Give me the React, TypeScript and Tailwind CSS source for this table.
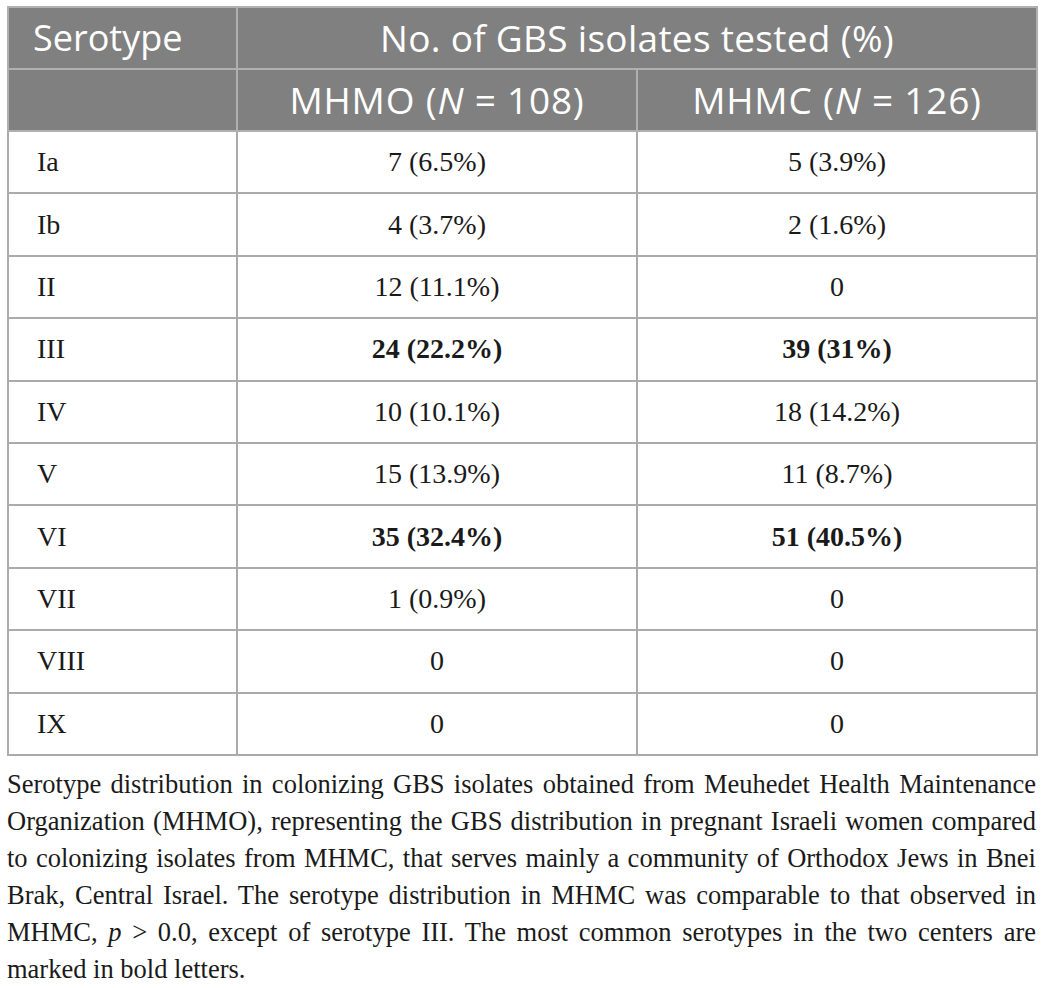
import React from "react";

const rows: { s: string; a: string; b: string; bold?: boolean }[] = [
  { s: "Ia", a: "7 (6.5%)", b: "5 (3.9%)" },
  { s: "Ib", a: "4 (3.7%)", b: "2 (1.6%)" },
  { s: "II", a: "12 (11.1%)", b: "0" },
  { s: "III", a: "24 (22.2%)", b: "39 (31%)", bold: true },
  { s: "IV", a: "10 (10.1%)", b: "18 (14.2%)" },
  { s: "V", a: "15 (13.9%)", b: "11 (8.7%)" },
  { s: "VI", a: "35 (32.4%)", b: "51 (40.5%)", bold: true },
  { s: "VII", a: "1 (0.9%)", b: "0" },
  { s: "VIII", a: "0", b: "0" },
  { s: "IX", a: "0", b: "0" },
];

const sans = "font-['Open_Sans',sans-serif]";
const serif = "font-['Liberation_Serif',serif]";

export default function App() {
  return (
    <div className="bg-white w-[1043px] h-[988px] overflow-hidden pt-[6px] px-[7px]">
      <table className="w-[1029px] border-collapse table-fixed">
        <colgroup>
          <col className="w-[229px]" />
          <col className="w-[400px]" />
          <col className="w-[400px]" />
        </colgroup>
        <thead>
          <tr className="h-[62px] bg-[#808080] text-white">
            <th className={`${sans} border-2 border-[#b0b0b0] text-left font-normal text-[36px] pl-[24px]`}>
              Serotype
            </th>
            <th colSpan={2} className={`${sans} border-2 border-[#b0b0b0] text-center font-normal text-[37px] tracking-[0.3px]`}>
              No. of GBS isolates tested (%)
            </th>
          </tr>
          <tr className="h-[62px] bg-[#808080] text-white">
            <th className="border-2 border-[#b0b0b0]"></th>
            <th className={`${sans} border-2 border-[#b0b0b0] text-center font-normal text-[37px] tracking-[0.8px]`}>
              MHMO (<i>N</i> = 108)
            </th>
            <th className={`${sans} border-2 border-[#b0b0b0] text-center font-normal text-[37px] tracking-[0.8px]`}>
              MHMC (<i>N</i> = 126)
            </th>
          </tr>
        </thead>
        <tbody className={`${serif} text-[28px] text-[#1a1a1a]`}>
          {rows.map((r) => (
            <tr key={r.s} className="h-[62.4px]">
              <td className="border-2 border-[#ababab] pl-[28px]">{r.s}</td>
              <td className={`border-2 border-[#ababab] text-center ${r.bold ? "font-bold" : ""}`}>{r.a}</td>
              <td className={`border-2 border-[#ababab] text-center ${r.bold ? "font-bold" : ""}`}>{r.b}</td>
            </tr>
          ))}
        </tbody>
      </table>
      <div className={`${serif} text-[26.5px] leading-[37px] text-[#1a1a1a] mt-[10px] w-[1029px]`}>
        <div className="text-justify [text-align-last:justify] whitespace-nowrap">
          Serotype distribution in colonizing GBS isolates obtained from Meuhedet Health Maintenance
        </div>
        <div className="text-justify [text-align-last:justify] whitespace-nowrap">
          Organization (MHMO), representing the GBS distribution in pregnant Israeli women compared
        </div>
        <div className="text-justify [text-align-last:justify] whitespace-nowrap">
          to colonizing isolates from MHMC, that serves mainly a community of Orthodox Jews in Bnei
        </div>
        <div className="text-justify [text-align-last:justify] whitespace-nowrap">
          Brak, Central Israel. The serotype distribution in MHMC was comparable to that observed in
        </div>
        <div className="text-justify [text-align-last:justify] whitespace-nowrap">
          MHMC, <i>p</i> &gt; 0.0, except of serotype III. The most common serotypes in the two centers are
        </div>
        <div className="whitespace-nowrap">marked in bold letters.</div>
      </div>
    </div>
  );
}
